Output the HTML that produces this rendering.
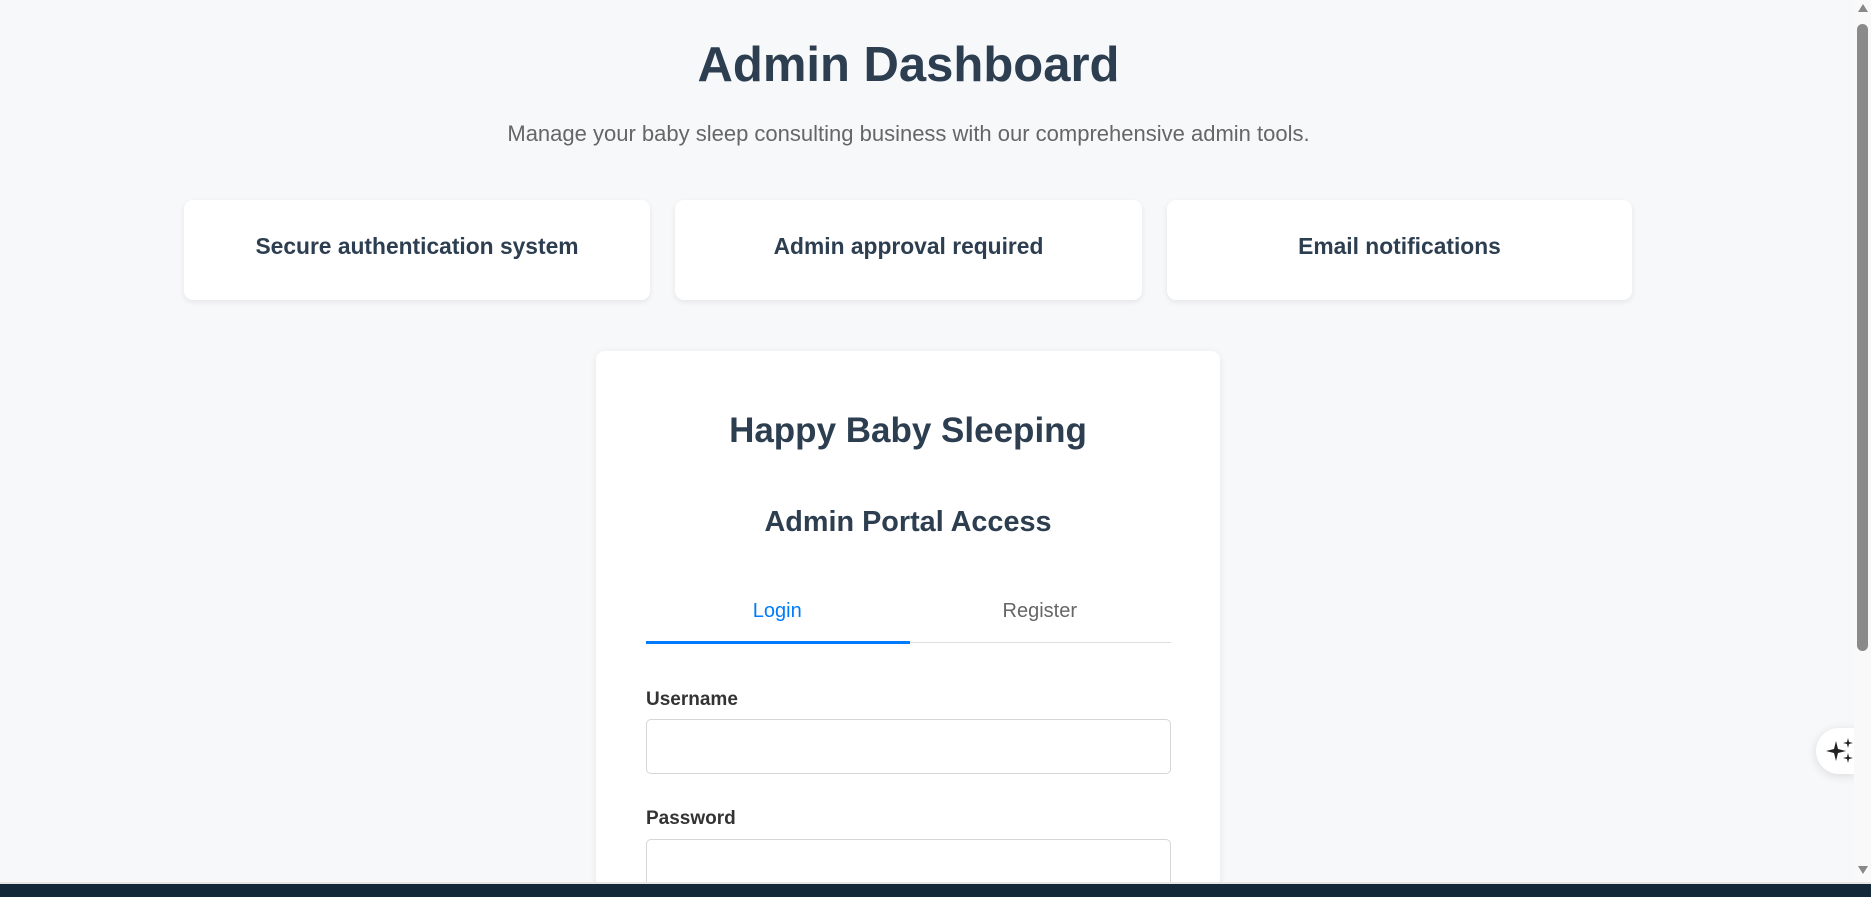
<!DOCTYPE html>
<html><head><meta charset="utf-8"><style>
*{box-sizing:border-box;margin:0;padding:0}
html,body{width:1871px;height:897px;overflow:hidden;background:#f7f8fa;font-family:"Liberation Sans",sans-serif;color:#2c3e50;position:relative}
.h1{position:absolute;left:0;width:1817px;top:37px;text-align:center;font-size:49px;font-weight:bold}
.sub{position:absolute;left:0;width:1817px;top:121px;text-align:center;font-size:22px;color:#666}
.card{position:absolute;top:200px;height:100px;background:#fff;border-radius:9px;box-shadow:0 2px 6px rgba(0,0,0,.08);font-size:22.8px;font-weight:bold;text-align:center;padding-top:33px}
.login{position:absolute;left:596px;top:351px;width:624px;height:532px;background:#fff;border-radius:9px 9px 0 0;box-shadow:0 2px 8px rgba(0,0,0,.08);overflow:hidden}
.t1{position:absolute;left:0;width:100%;top:60px;text-align:center;font-size:35px;font-weight:bold}
.t2{position:absolute;left:0;width:100%;top:155px;text-align:center;font-size:28.8px;font-weight:bold}
.tabs{position:absolute;left:50px;width:525px;top:240px;height:52px;border-bottom:1px solid #ddd;font-size:20px}
.tab{position:absolute;top:9px;width:50%;text-align:center}
.lbl{position:absolute;left:50px;font-size:19px;font-weight:bold;color:#333}
.inp{position:absolute;left:50px;width:525px;height:55px;border:1px solid #d6d6d6;border-radius:5px}
</style></head><body>
<div class="h1">Admin Dashboard</div>
<div class="sub">Manage your baby sleep consulting business with our comprehensive admin tools.</div>
<div class="card" style="left:184px;width:466px">Secure authentication system</div>
<div class="card" style="left:675px;width:467px">Admin approval required</div>
<div class="card" style="left:1167px;width:465px">Email notifications</div>
<div class="login">
<div class="t1">Happy Baby Sleeping</div>
<div class="t2">Admin Portal Access</div>
<div class="tabs">
<div class="tab" style="left:0;color:#007bff">Login</div>
<div class="tab" style="left:50%;color:#666">Register</div>
<div style="position:absolute;left:0;bottom:-2px;width:264px;height:3px;background:#007bff"></div>
</div>
<div class="lbl" style="top:338px">Username</div>
<div class="inp" style="top:368px"></div>
<div class="lbl" style="top:457px">Password</div>
<div class="inp" style="top:488px"></div>
</div>
<div style="position:absolute;left:1816px;top:728px;width:40px;height:46px;background:#fff;border-radius:23px 0 0 23px;box-shadow:0 2px 10px rgba(0,0,0,.12)">
<svg width="30" height="30" viewBox="0 0 30 30" style="position:absolute;left:9px;top:8px"><path d="M11 5 L13 13 L21 15 L13 17 L11 25 L9 17 L1 15 L9 13Z" fill="#222"/><path d="M23 2 L24 6 L28 7 L24 8 L23 12 L22 8 L18 7 L22 6Z" fill="#222"/><path d="M23 17 L24 21 L28 22 L24 23 L23 27 L22 23 L18 22 L22 21Z" fill="#222"/></svg>
</div>
<div style="position:absolute;left:1854px;top:0;width:17px;height:883px;background:#f9f9f9"></div>
<div style="position:absolute;left:1858px;top:4px;width:0;height:0;border-left:5px solid transparent;border-right:5px solid transparent;border-bottom:8px solid #888"></div>
<div style="position:absolute;left:1857px;top:24px;width:11px;height:627px;background:#8a8a8a;border-radius:6px"></div>
<div style="position:absolute;left:1858px;top:866px;width:0;height:0;border-left:5px solid transparent;border-right:5px solid transparent;border-top:8px solid #888"></div>
<div style="position:absolute;left:0;top:882px;width:1871px;height:2px;background:#e6e6e6"></div>
<div style="position:absolute;left:0;top:884px;width:1871px;height:13px;background:#13293a"></div>
</body></html>
